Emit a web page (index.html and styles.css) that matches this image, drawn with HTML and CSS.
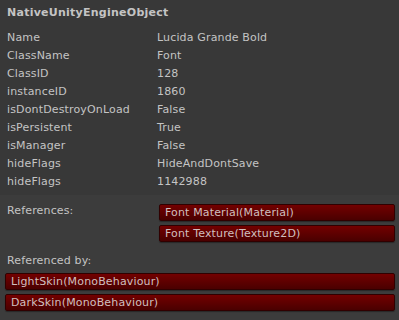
FILE: index.html
```html
<!DOCTYPE html>
<html>
<head>
<meta charset="utf-8">
<link rel="stylesheet" href="styles.css">
</head>
<body>
<div class="top">
  <div class="title">NativeUnityEngineObject</div>
  <div class="props">
    <div class="row"><span class="k">Name</span><span class="v">Lucida Grande Bold</span></div>
    <div class="row"><span class="k">ClassName</span><span class="v">Font</span></div>
    <div class="row"><span class="k">ClassID</span><span class="v">128</span></div>
    <div class="row"><span class="k">instanceID</span><span class="v">1860</span></div>
    <div class="row"><span class="k">isDontDestroyOnLoad</span><span class="v">False</span></div>
    <div class="row"><span class="k">isPersistent</span><span class="v">True</span></div>
    <div class="row"><span class="k">isManager</span><span class="v">False</span></div>
    <div class="row"><span class="k">hideFlags</span><span class="v">HideAndDontSave</span></div>
    <div class="row"><span class="k">hideFlags</span><span class="v">1142988</span></div>
  </div>
</div>
<div class="bottom">
  <div class="refs">
    <div class="refs-label">References:</div>
    <div class="btns">
      <div class="btn">Font Material(Material)</div>
      <div class="btn">Font Texture(Texture2D)</div>
    </div>
  </div>
  <div class="by-label">Referenced by:</div>
  <div class="btns by">
    <div class="btn">LightSkin(MonoBehaviour)</div>
    <div class="btn">DarkSkin(MonoBehaviour)</div>
  </div>
</div>
</body>
</html>
```
FILE: styles.css
```css
html, body {
  margin: 0;
  padding: 0;
  background: #3c3c3c;
  height: 320px;
  overflow: hidden;
}
body {
  font-family: "DejaVu Sans", "Verdana", sans-serif;
  font-size: 11px;
  letter-spacing: 0.15px;
  color: #c4c4c4;
}
.top {
  background: #383838;
  padding: 4px 4px 4px 7px;
}
.title {
  font-weight: bold;
  letter-spacing: 0.25px;
  line-height: 18px;
  margin-bottom: 7px;
}
.props {
  display: flex;
  flex-direction: column;
}
.row {
  display: grid;
  grid-template-columns: 150px 1fr;
  line-height: 18px;
  height: 18px;
}
.bottom {
  padding: 9px 4px 0 5px;
}
.refs {
  display: grid;
  grid-template-columns: 154px 1fr;
}
.refs-label {
  padding-left: 2px;
  line-height: 13px;
}
.btns {
  display: flex;
  flex-direction: column;
  gap: 4px;
}
.btn {
  height: 15px;
  line-height: 15px;
  padding-left: 5px;
  border: 1px solid #300000;
  border-radius: 2px;
  background: linear-gradient(#730000, #4a0000);
  color: #cfbfbf;
  box-shadow: 0 1px 1px rgba(0,0,0,0.35);
}
.by-label {
  padding-left: 2px;
  line-height: 18px;
  margin-top: 10px;
  margin-bottom: 3px;
}
```
